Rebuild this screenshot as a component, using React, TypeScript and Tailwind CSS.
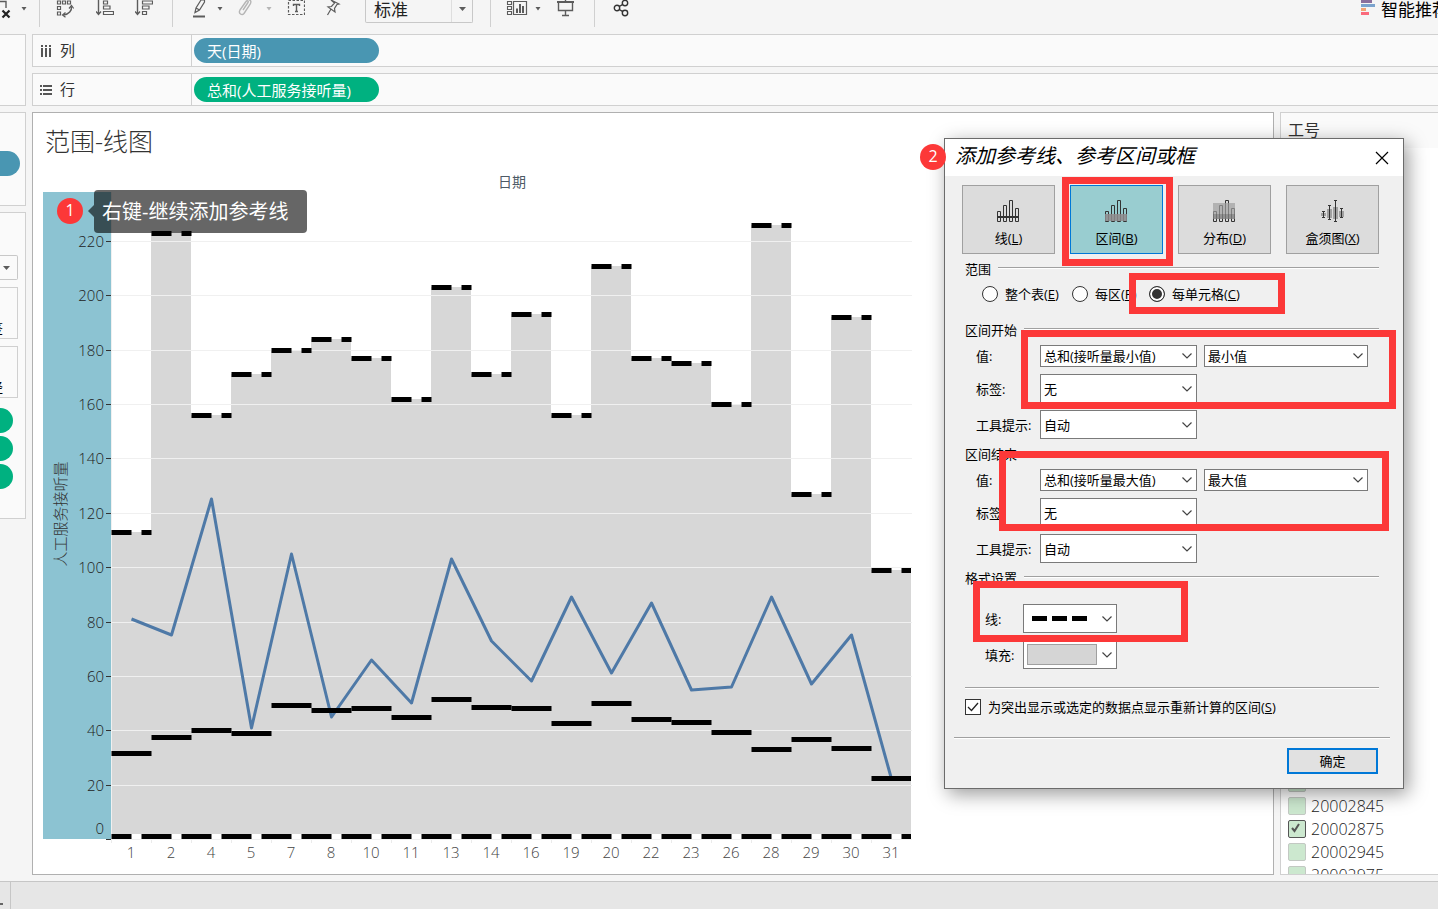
import React from "react";

const days = [1, 2, 4, 5, 7, 8, 10, 11, 13, 14, 16, 19, 20, 22, 23, 26, 28, 29, 30, 31];
const maxValues = [113, 223, 156, 171, 180, 184, 177, 162, 203, 171, 193, 156, 211, 177, 175, 160, 226, 127, 192, 99];
const values = [81, 75, 125, 41, 105, 45, 66, 50, 103, 73, 58, 89, 61, 87, 55, 56, 89, 57, 75, 22];
const averages = [31.6, 37.5, 40.1, 39, 49.3, 47.5, 48.2, 44.9, 51.5, 48.6, 48.2, 42.7, 50, 44.2, 43, 39.4, 33.1, 36.8, 33.5, 22.4];
const axisTicks = [0, 20, 40, 60, 80, 100, 120, 140, 160, 180, 200, 220];

const filterItems = [
    { id: "20002805", checked: false },
    { id: "20002845", checked: false },
    { id: "20002875", checked: true },
    { id: "20002945", checked: false },
    { id: "20002975", checked: false },
];

// 图表坐标
const LEFT = 68;
const STEP = 40;
const ZERO = 671;
const toY = (v: number) => Math.round(ZERO - v * 2.718);

const Caret = ({ className = "" }: { className?: string }) => (
    <svg className={`shrink-0 w-1.5 h-[27px] ${className}`} viewBox="0 0 6 27" aria-hidden="true">
        <path d="M0.5 7h5L3 10.5z" fill="currentColor" />
    </svg>
);

const Separator = ({ className = "" }: { className?: string }) => (
    <div className={`shrink-0 w-px h-[27px] bg-[#d0d0d0] ${className}`} />
);

interface ToolProps {
    label: string;
    className: string;
    width: number;
    children: React.ReactNode;
}

const Tool = ({ label, className, width, children }: ToolProps) => (
    <button aria-label={label} className={`shrink-0 ${className}`}>
        <svg width={width} height={27} viewBox={`0 0 ${width} 27`} fill="none" stroke="currentColor" strokeWidth="1.4">
            {children}
        </svg>
    </button>
);

const Toolbar = () => (
    <header className="h-[34px] shrink-0 flex items-start overflow-hidden text-[#5c5c5c]">
        <Tool label="清除工作表" className="" width={11}>
            <path d="M0 1.5h6V8" />
            <path d="M2.5 10.5l7 7M9.500 10.5l-7 7" stroke="#222" strokeWidth="2.2" />
        </Tool>
        <Caret className="ml-2.5" />
        <Separator className="ml-3" />
        <Tool label="交换行和列" className="ml-4" width={18}>
            <path d="M1.500 1h3v3h-3zM6.500 1h3v3h-3zM11.500 1h3v3h-3zM1.500 6.500h3v3h-3zM1.500 12h3v3h-3z" strokeWidth="1.2" />
            <path d="M15.500 6.500c.5 4-2.500 8-8 8.500" />
            <path d="M13 8.500l2.500-3 2.200 3M9.500 12.500l-3 2.500 3 2.200" strokeWidth="1.2" />
        </Tool>
        <Tool label="升序排序" className="ml-[22px]" width={18}>
            <path d="M2.500 0v14M0 11.500l2.500 3 2.500-3" />
            <path d="M7.500 1h4v3h-4zM7.500 6h6.500v3H7.500zM7.500 11.500h10v3h-10z" strokeWidth="1.2" />
        </Tool>
        <Tool label="降序排序" className="ml-[21px]" width={18}>
            <path d="M2.500 0v14M0 11.500l2.500 3 2.500-3" />
            <path d="M7.500 1h10v3h-10zM7.500 6h6.500v3H7.500zM7.500 11.500h4v3h-4z" strokeWidth="1.2" />
        </Tool>
        <Separator className="ml-[19px]" />
        <Tool label="突出显示" className="ml-[19px]" width={14}>
            <path d="M3 12.500l1-4.500 5-8h3.500v2l-5 8zM4 8l3.500 2" strokeWidth="1.2" />
            <path d="M1 16.500h12" strokeWidth="2" />
        </Tool>
        <Caret className="ml-[11px]" />
        <Tool label="分组成员" className="ml-[15px] text-[#b5b5b5]" width={14}>
            <path d="M5 10l5-7.500c1-1.500-1-2.500-2-1L2 10c-2 3.500 2 6 4 3.500l6-9c1.500-2.500 1-4-1-5" />
        </Tool>
        <Caret className="ml-3.5 text-[#b5b5b5]" />
        <Tool label="显示标记标签" className="ml-[15px]" width={18}>
            <path d="M1.500 0.500h16v14h-16z" strokeDasharray="2.500 1.500" strokeWidth="1.2" />
            <path d="M6.500 6V4.500h6V6M9.500 4.500v7M8 11.500h3" />
        </Tool>
        <Tool label="固定" className="ml-5" width={16}>
            <path d="M6 0l8 4-2 .5-2.500 4 .5 3.500-7-5 3.500-.5 3-3.500zM6 9l-3.500 6" strokeWidth="1.2" />
        </Tool>
        <div className="relative ml-6 shrink-0">
            <select
                aria-label="适合"
                className="appearance-none block w-[108px] h-[23px] pl-2 pb-0.5 border border-t-0 border-[#c8c8c8] rounded-b-xs text-[17px] leading-5 text-[#222]"
            >
                <option>标准</option>
            </select>
            <div className="absolute right-0 top-0 h-[22px] w-[22px] flex justify-center border-l border-[#dedede] pointer-events-none">
                <svg className="mt-[7px]" width="7" height="4" viewBox="0 0 7 4"><path d="M0 0h7L3.500 4z" fill="currentColor" /></svg>
            </div>
        </div>
        <Separator className="ml-[17px]" />
        <Tool label="显示/隐藏卡" className="ml-[15px]" width={22}>
            <path d="M1.500 1.500h4v3h-4zM1.500 6.500h4v3h-4zM1.500 11.500h4v3h-4z" strokeWidth="1.1" />
            <path d="M7.500 1.500h13v13h-13z" strokeWidth="1.2" />
            <path d="M11 13V8.500M14 13V4M17 13V6" strokeWidth="2" />
        </Tool>
        <Caret className="ml-[7px]" />
        <Tool label="演示模式" className="ml-4" width={18}>
            <path d="M0 2h17" strokeWidth="2" />
            <path d="M1.500 2v8.500h14V2M8.500 10.500v5M5 15.500h7M8.500 0v2" />
        </Tool>
        <Separator className="ml-[19px]" />
        <Tool label="共享" className="ml-[18px] text-[#333]" width={16}>
            <circle cx="4" cy="8" r="2.700" />
            <circle cx="12" cy="3" r="2.700" />
            <circle cx="12" cy="13" r="2.700" />
            <path d="M6.300 6.500l3.500-2.200M6.300 9.500l3.500 2.200" />
        </Tool>
        <button className="ml-auto w-[77px] shrink-0 flex items-start gap-1.5 text-[17px] leading-5 text-black whitespace-nowrap">
            <svg className="shrink-0" width="14" height="16" viewBox="0 0 14 16">
                <path d="M0 0h11v3H0z" fill="#8b6f9c" />
                <path d="M0 4h14v3H0z" fill="#7ba3cd" />
                <path d="M0 8h5v3H0z" fill="#f1a374" />
                <path d="M0 12h8v3H0z" fill="#fa6a7c" />
            </svg>
            智能推荐
        </button>
    </header>
);

const CardPanels = () => (
    <aside className="w-[26px] shrink-0 flex flex-col gap-1.5 overflow-hidden text-[13px]">
        <div className="h-[72px] border border-l-0 border-[#d0d0d0] bg-[#fafafa]" />
        <div className="h-[94px] pt-[38px] border border-l-0 border-[#d0d0d0] bg-[#fafafa]">
            <div className="w-5 h-[25px] rounded-r-full bg-[#4996b2]" />
        </div>
        <div className="h-[307px] pt-[42px] border border-l-0 border-[#d0d0d0] bg-[#fafafa]">
            <div className="w-[18px] h-[25px] flex items-center pl-[3px] border border-l-0 border-[#c8c8c8] rounded-r-xs text-[#5c5c5c]">
                <svg width="7" height="4" viewBox="0 0 7 4"><path d="M0 0h7L3.500 4z" fill="currentColor" /></svg>
            </div>
            <div className="mt-[7px] w-[18px] h-[52px] flex justify-end items-end pr-3.5 pb-0.5 border border-l-0 border-[#d0d0d0] overflow-hidden text-black leading-4">签</div>
            <div className="mt-[7px] w-[18px] h-[52px] flex justify-end items-end pr-3.5 pb-0.5 border border-l-0 border-[#d0d0d0] overflow-hidden text-black leading-4">径</div>
            <div className="mt-2.5 flex flex-col gap-[3px]">
                <div className="w-[13px] h-[25px] rounded-r-full bg-[#00b180]" />
                <div className="w-[13px] h-[25px] rounded-r-full bg-[#00b180]" />
                <div className="w-[13px] h-[25px] rounded-r-full bg-[#00b180]" />
            </div>
        </div>
    </aside>
);

interface ShelfProps {
    name: string;
    pill: string;
    pillColor: string;
    icon: React.ReactNode;
}

const Shelf = ({ name, pill, pillColor, icon }: ShelfProps) => (
    <div className="h-[33px] shrink-0 flex items-stretch border border-r-0 border-[#d0d0d0] bg-[#fafafa] text-[15px]">
        <div className="w-[159px] flex items-center gap-2 pl-[7px] border-r border-[#d0d0d0] text-[#333]">
            {icon}
            {name}
        </div>
        <button className={`ml-0.5 my-[3px] w-[185px] h-[25px] rounded-full pl-[13px] text-left leading-6 text-white ${pillColor}`}>
            {pill}
        </button>
    </div>
);

const Badge = ({ n, className }: { n: number; className: string }) => (
    <div className={`absolute size-[26px] rounded-full bg-[#fc3838] text-white text-base leading-6 text-center ${className}`}>
        {n}
    </div>
);

const RangeChart = () => (
    <svg className="block ml-2.5 mt-[11px] shrink-0" width="877" height="700" viewBox="0 0 877 700">
        {/* 日期标题 & 纵轴背景 */}
        <text x="469" y="19" textAnchor="middle" fontSize="14" fill="#4d5a66">日期</text>
        <rect x="0" y="24" width="68" height="647" fill="#8cc3d2" />
        <text transform="translate(23 346) rotate(-90)" textAnchor="middle" fontSize="15" fontWeight="300" fill="#333">
            人工服务接听量
        </text>

        {/* 区间填充 */}
        {maxValues.map((v, i) => (
            <rect key={i} x={LEFT + i * STEP} y={toY(v)} width={STEP} height={668 - toY(v)} fill="#d7d7d7" shapeRendering="crispEdges" />
        ))}

        {/* 网格线 & 刻度 */}
        {axisTicks.map((t) => (
            <g key={t}>
                <path d={`M${LEFT} ${toY(t) + 0.5}H869`} stroke="#f0f0f0" />
                <path d={`M63 ${toY(t) + 0.5}H${LEFT}`} stroke="#333" />
                <text x="61" y={t === 0 ? 666 : toY(t) + 6} textAnchor="end" fontSize="15" fontWeight="300" fill="#222">{t}</text>
            </g>
        ))}
        <path d="M68.5 24V671" stroke="#f0f0f0" />

        <polyline
            points={values.map((v, i) => `${LEFT + 20.5 + i * STEP},${toY(v)}`).join(" ")}
            fill="none"
            stroke="#4e79a7"
            strokeWidth="3"
            strokeLinejoin="round"
        />

        {/* 最大值 & 平均值 */}
        {days.map((day, i) => {
            const x = LEFT + 0.5 + i * STEP;
            const end = Math.min(x + STEP, 868);
            return (
                <g key={day} stroke="#000" strokeWidth="5">
                    <path d={`M${x} ${toY(maxValues[i]) + 0.5}H${end}`} strokeDasharray="20 10 10" />
                    <path d={`M${x} ${toY(averages[i]) + 0.5}H${end}`} />
                    <path d={`M${x} 672V675`} stroke="#ebebeb" strokeWidth="1" />
                    <text x={x + 19.5} y="690" textAnchor="middle" fontSize="15" fontWeight="300" fill="#444" stroke="none">{day}</text>
                </g>
            );
        })}

        {/* 最小值 */}
        <path d="M68.5 668.5H868" stroke="#fff" strokeWidth="5" />
        <path d="M68.5 668.5H868" stroke="#000" strokeWidth="5" strokeDasharray="30 10" strokeDashoffset="10" />
    </svg>
);

const ChartPanel = () => (
    <section className="relative flex-1 min-w-0 flex flex-col pt-3.5 border border-[#b0b0b0] bg-white overflow-hidden">
        <h1 className="pl-3 h-[30px] text-[25px] leading-7 font-light text-[#333]">范围-线图</h1>
        <RangeChart />
        <Badge n={1} className="left-6 top-[85px]" />
        <div className="absolute left-[61px] top-[77px] h-[43px] px-2 w-[213px] rounded-sm bg-black/60 text-white text-xl leading-[43px] whitespace-nowrap">
            右键-继续添加参考线
            <svg className="absolute -left-1.5 top-[15px]" width="6" height="12" viewBox="0 0 6 12">
                <path d="M6 0v12L0 6z" fill="#000" fillOpacity="0.6" />
            </svg>
        </div>
    </section>
);

const FilterPanel = () => (
    <section className="w-[158px] shrink-0 flex flex-col border border-r-0 border-[#d0d0d0] bg-white overflow-hidden">
        <h2 className="h-[35px] shrink-0 pl-[7px] bg-[#fafafa] text-base leading-[34px] text-[#333]">工号</h2>
        <div className="flex-1 min-h-0 flex flex-col justify-end overflow-hidden">
            <div className="-mb-3">
                {filterItems.map((item) => (
                    <label key={item.id} className="h-[23px] flex items-center gap-[5px] pl-[7px] text-base font-light text-[#222]">
                        <span className="relative size-[18px]">
                            <input
                                type="checkbox"
                                defaultChecked={item.checked}
                                className="peer appearance-none block size-[18px] border border-[#c3c9c3] rounded-xs bg-[#cce8cf] checked:border-[#555]"
                            />
                            <svg className="absolute left-[3px] top-[3px] hidden peer-checked:block pointer-events-none" width="10" height="10" viewBox="0 0 10 10">
                                <path d="M1 5l2.500 3L8 1" fill="none" stroke="#555" strokeWidth="2" />
                            </svg>
                        </span>
                        {item.id}
                    </label>
                ))}
            </div>
        </div>
    </section>
);

const Chevron = () => (
    <svg className="absolute right-1 top-1/2 -mt-[3px] pointer-events-none" width="10" height="6" viewBox="0 0 10 6">
        <path d="M0.5 0.5L5 5l4.500-4.500" fill="none" stroke="#444" strokeWidth="1.2" />
    </svg>
);

const Combo = ({ label, value, className }: { label: string; value: string; className: string }) => (
    <div className={`relative bg-white border border-[#7a7a7a] ${className}`}>
        <select aria-label={label} className="appearance-none block size-full pl-[3px] pr-4 text-black">
            <option>{value}</option>
        </select>
        <Chevron />
    </div>
);

// 分组标题和右侧分隔线
const Legend = ({ children }: { children: React.ReactNode }) => (
    <div className="h-5 pl-[3px] flex items-start gap-[7px]">
        <span className="leading-5">{children}</span>
        <div className="mt-2 flex-1 h-0.5 bg-[#a0a0a0] border-b border-white" />
    </div>
);

const RangeFields = ({ title, aggregate }: { title: string; aggregate: string }) => (
    <>
        <Legend>{title}</Legend>
        <div className="mt-[5px] pl-3.5 grid grid-cols-[57px_157px_164px] gap-[7px] items-center">
            <span>值:</span>
            <Combo label={`${title}值`} value={`总和(接听量${aggregate})`} className="h-[22px]" />
            <Combo label={`${title}聚合`} value={aggregate} className="h-[22px]" />
            <span>标签:</span>
            <Combo label={`${title}标签`} value="无" className="h-[29px]" />
            <span />
            <span className="whitespace-nowrap">工具提示:</span>
            <Combo label={`${title}工具提示`} value="自动" className="h-[29px]" />
        </div>
    </>
);

const bars = "M.5 11.500h3v10h-3zM6.500 5.500h3v16h-3zM12.500.5h3v21h-3zM18.500 8.500h3v13h-3z";

const modes = [
    {
        name: "线", hotkey: "L", selected: false,
        icon: <><path d={bars} /><path d="M0 17h22" strokeWidth="2" /></>,
    },
    {
        name: "区间", hotkey: "B", selected: true,
        icon: <><path d={bars} /><path d="M0 14h22v7H0z" fill="#8f8b8d" fillOpacity="0.85" stroke="none" /></>,
    },
    {
        name: "分布", hotkey: "D", selected: false,
        icon: (
            <>
                <path d={bars} />
                <path d="M0 3h22v11H0z" fill="#a0a0a0" fillOpacity="0.7" stroke="none" />
                <path d="M0 14h22v5H0z" fill="#808080" fillOpacity="0.8" stroke="none" />
            </>
        ),
    },
    {
        name: "盒须图", hotkey: "X", selected: false,
        icon: (
            <>
                <path d="M0 13h5v3H0zM6 9h5v9H6zM12 7h5v12h-5zM18 11h5v6h-5z" fill="#a0a0a0" stroke="none" />
                <path d="M2.500 11v7M1 11.500h3M1 17.500h3M8.500 5v15M7 5.500h3M7 19.500h3M14.500 0v22M13 .5h3M13 21.500h3M20.500 8v10M19 8.500h3M19 17.500h3" />
            </>
        ),
    },
];

const scopes = [
    { name: "整个表", hotkey: "E", checked: false, className: "w-[90px]" },
    { name: "每区", hotkey: "P", checked: false, className: "w-[77px]" },
    { name: "每单元格", hotkey: "C", checked: true, className: "" },
];

const ReferenceDialog = () => (
    <div
        role="dialog"
        aria-labelledby="dialog-title"
        className="absolute left-[944px] top-[138px] w-[460px] border border-[#6b6b6b] bg-[#f0f0f0] text-[13px] leading-5 text-black shadow-[4px_5px_18px_rgba(0,0,0,0.4)]"
    >
        <div className="h-[37px] flex items-center justify-between pl-2.5 pr-3.5 bg-white">
            <h2 id="dialog-title" className="pb-1 text-xl leading-6 italic">添加参考线、参考区间或框</h2>
            <button aria-label="关闭">
                <svg width="14" height="14" viewBox="0 0 14 14">
                    <path d="M1 1l12 12M13 1L1 13" stroke="#000" strokeWidth="1.2" />
                </svg>
            </button>
        </div>

        <div className="pt-[9px] pl-[17px] pr-6 pb-3.5">
            <div className="flex gap-[15px]">
                {modes.map((mode) => (
                    <button
                        key={mode.hotkey}
                        className={`flex-1 h-[69px] pt-3.5 flex flex-col items-center gap-1.5 border ${mode.selected ? "bg-[#99cdd0] border-[#0078d7]" : "bg-[#dcdcdc] border-[#a0a0a0]"}`}
                    >
                        <svg width="23" height="22" viewBox="0 0 23 22" fill="none" stroke="#333">{mode.icon}</svg>
                        <span>{mode.name}(<u>{mode.hotkey}</u>)</span>
                    </button>
                ))}
            </div>

            {/* 范围 */}
            <div className="mt-[5px]">
                <Legend>范围</Legend>
            </div>
            <div className="mt-[5px] pl-5 flex">
                {scopes.map((scope) => (
                    <label key={scope.hotkey} className={`flex items-center gap-[7px] whitespace-nowrap ${scope.className}`}>
                        <input
                            type="radio"
                            name="scope"
                            defaultChecked={scope.checked}
                            className="appearance-none shrink-0 size-4 rounded-full border border-[#333] bg-white checked:bg-[#333] checked:shadow-[inset_0_0_0_2px_white]"
                        />
                        <span>{scope.name}(<u>{scope.hotkey}</u>)</span>
                    </label>
                ))}
            </div>

            <div className="mt-4">
                <RangeFields title="区间开始" aggregate="最小值" />
            </div>
            <div className="mt-[5px]">
                <RangeFields title="区间结束" aggregate="最大值" />
            </div>

            {/* 格式设置 */}
            <div className="mt-[5px]">
                <Legend>格式设置</Legend>
            </div>
            <div className="mt-4 pl-[23px] grid grid-cols-[38px_94px] gap-y-[7px] items-center">
                <label htmlFor="line-style">线:</label>
                <div className="relative h-[29px] border border-[#7a7a7a] bg-white">
                    <select id="line-style" className="appearance-none block size-full"><option value="dashed" aria-label="虚线"></option></select>
                    <svg className="absolute left-2 top-[11px] pointer-events-none" width="55" height="5" viewBox="0 0 55 5">
                        <path d="M0 0h15v5H0zM20 0h15v5H20zM40 0h15v5H40z" />
                    </svg>
                    <Chevron />
                </div>
                <label htmlFor="fill-color">填充:</label>
                <div className="relative h-[29px] border border-[#7a7a7a] bg-white">
                    <select id="fill-color" className="appearance-none block size-full"><option value="gray" aria-label="灰色"></option></select>
                    <div className="absolute left-[3px] top-[3px] w-[70px] h-[21px] border border-[#a0a0a0] bg-[#d5d5d5] pointer-events-none" />
                    <Chevron />
                </div>
            </div>

            <div className="mt-[18px] ml-[3px] h-0.5 bg-[#a0a0a0] border-b border-white" />
            <label className="mt-2 ml-[3px] flex items-center gap-[7px]">
                <span className="relative size-4">
                    <input type="checkbox" defaultChecked className="peer appearance-none block size-4 border border-[#333] bg-white" />
                    <svg className="absolute left-0.5 top-[3px] hidden peer-checked:block pointer-events-none" width="12" height="10" viewBox="0 0 12 10">
                        <path d="M1 5l3.500 3.500L11 1" fill="none" stroke="#222" strokeWidth="1.300" />
                    </svg>
                </span>
                <span>为突出显示或选定的数据点显示重新计算的区间(<u>S</u>)</span>
            </label>

            <div className="mt-5 -ml-2 -mr-[11px] h-0.5 bg-[#a0a0a0] border-b border-white" />
            <div className="mt-[9px] pr-px flex justify-end">
                <button className="w-[91px] h-[26px] border-2 border-[#0078d7] bg-[#e1e1e1]">确定</button>
            </div>
        </div>

        {/* 标注 */}
        <Badge n={2} className="-left-[25px] top-[5px]" />
        <div className="absolute pointer-events-none border-7 border-[#fc3838] left-[117px] top-[38px] w-[111px] h-[89px]" />
        <div className="absolute pointer-events-none border-7 border-[#fc3838] left-[184px] top-[134px] w-[156px] h-[41px]" />
        <div className="absolute pointer-events-none border-7 border-[#fc3838] left-[76px] top-[191px] w-[375px] h-[79px]" />
        <div className="absolute pointer-events-none border-7 border-[#fc3838] left-[54px] top-[312px] w-[390px] h-[80px]" />
        <div className="absolute pointer-events-none border-7 border-[#fc3838] left-[28px] top-[442px] w-[215px] h-[61px]" />
    </div>
);

const App = () => {
    return (
        <div className="relative h-screen flex flex-col overflow-hidden bg-[#f5f5f5] font-['Open_Sans','Noto_Sans_CJK_SC',sans-serif]">
            <Toolbar />
            <div className="flex-1 min-h-0 flex gap-1.5 pb-1.5">
                <CardPanels />
                <main className="flex-1 min-w-0 flex flex-col gap-1.5">
                    <Shelf
                        name="列"
                        pill="天(日期)"
                        pillColor="bg-[#4996b2]"
                        icon={
                            <svg width="12" height="12" viewBox="0 0 12 12" fill="#555">
                                <path d="M1 0h2v2H1zM5 0h2v2H5zM9 0h2v2H9zM1 3h2v9H1zM5 3h2v9H5zM9 3h2v9H9z" />
                            </svg>
                        }
                    />
                    <Shelf
                        name="行"
                        pill="总和(人工服务接听量)"
                        pillColor="bg-[#00b180]"
                        icon={
                            <svg width="12" height="12" viewBox="0 0 12 12" fill="#555">
                                <path d="M0 1h2v2H0zM0 5h2v2H0zM0 9h2v2H0zM3 1h9v2H3zM3 5h9v2H3zM3 9h9v2H3z" />
                            </svg>
                        }
                    />
                    <div className="flex-1 min-h-0 flex gap-1.5">
                        <ChartPanel />
                        <FilterPanel />
                    </div>
                </main>
            </div>
            <footer className="h-7 shrink-0 flex border-t border-[#c6c6c6] bg-[#e6e6e6]">
                <div className="w-[11px] pt-[21px] border-r border-[#c6c6c6]">
                    <div className="w-[3px] h-0.5 bg-[#666]" />
                </div>
            </footer>
            <ReferenceDialog />
        </div>
    );
};

export default App;
